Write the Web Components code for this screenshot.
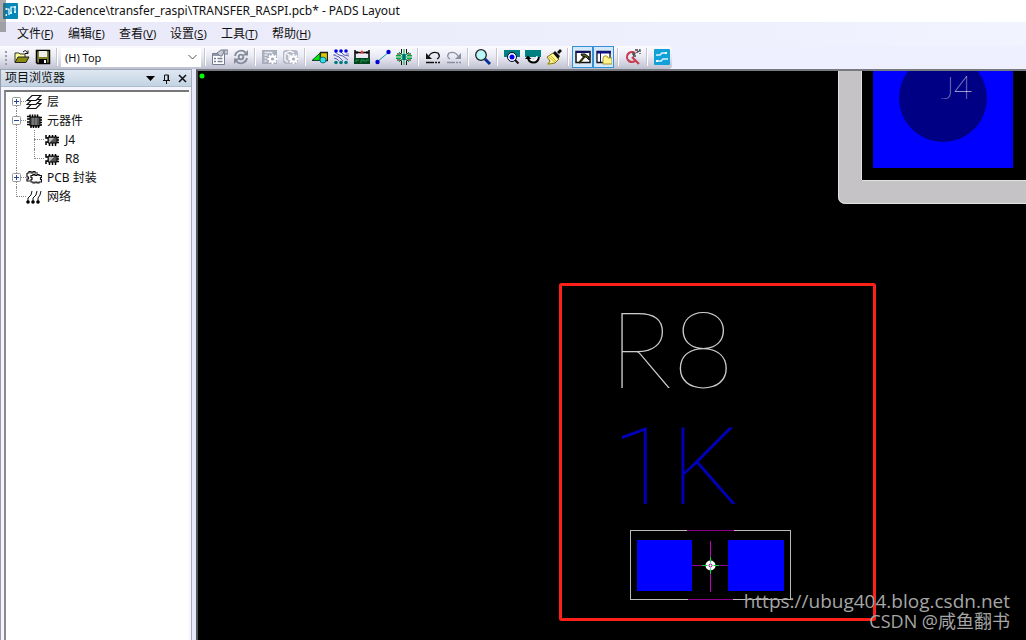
<!DOCTYPE html>
<html lang="zh-CN">
<head>
<meta charset="utf-8">
<title>PADS Layout</title>
<style>
html,body{margin:0;height:100%}
body{font:12px/16px "Noto Sans","Noto Sans CJK SC",sans-serif;color:#111;background:#eef0ff;overflow:hidden}
</style>
</head>
<body>
<pads-window></pads-window>
<script>
const define = (name, html, ready) => {
  const t = document.createElement('template');
  t.innerHTML = html;
  customElements.define(name, class extends HTMLElement {
    connectedCallback() {
      if (this.shadowRoot) return;
      this.attachShadow({mode: 'open'}).append(t.content.cloneNode(true));
      if (ready) ready(this, this.shadowRoot);
    }
  });
};

const gear = (x, y, c) => `<path d="M${x} ${y-5}v10M${x-5} ${y}h10M${x-3.5} ${y-3.5}l7 7M${x+3.5} ${y-3.5}l-7 7" stroke="${c}" stroke-width="1.8"/><circle cx="${x}" cy="${y}" r="3.4" fill="${c}"/><circle cx="${x}" cy="${y}" r="1.6" fill="#a0a6b6"/>`;

const icons = {
  open: '<path d="M1 13V4h4l1 1h5v3" fill="#ffff9c" stroke="#333" /><path d="M1 13.500L4 8h11l-3 5.500z" fill="#8b8b10" stroke="#222"/><path d="M9 3q3-3 4.500 1M14 1.500v3h-3" fill="none" stroke="#111"/>',
  save: '<path d="M1.500 1.500h13v13h-12l-1-1z" fill="#83832a" stroke="#000" stroke-width="1.500"/><path d="M4 2h8v6H4z" fill="#eee"/><path d="M4 10h8v5H4z" fill="#000"/><path d="M9 11h2v3H9z" fill="#fff"/>',
  props: '<path d="M.5 4.500h12v11H.500z" fill="#fff" stroke="#777e91"/><path d="M1 5h8v2H1z" fill="#9299aa"/><path d="M2 9.500h2M5.500 9.500h5M2 12.500h2M5.500 12.500h5" stroke="#777e91" stroke-width="1.500"/><path d="M5 4l4-3h3v2l-2 4H8zM12 1h4v4h-4z" fill="#c5c9d4" stroke="#777e91"/>',
  cycle: '<path d="M2 7a6.200 6.200 0 0 1 10.500-3.500M14 9a6.200 6.200 0 0 1-10.500 3.500" fill="none" stroke="#858b9b" stroke-width="1.800"/><path d="M15 1v5.500h-5.500zM1 15V9.500h5.500z" fill="#858b9b"/><circle cx="8" cy="8" r="2.300" fill="none" stroke="#858b9b" stroke-width="1.800"/>',
  cfg1: '<path d="M0 1h15v14H0z" fill="#a9aebd"/><path d="M2.500 3.500h8M2.500 6h3M2.500 9h2M2.500 12h2" stroke="#e9ebf2" stroke-width="1.300"/>' + gear(10.5,10,'#fff'),
  cfg2: '<rect y="1" width="15" height="14" rx="3" fill="#b4b8c7"/><path d="M2 4l5-2 4 2M2 4v7l3 2M2 4l4 2v3" fill="none" stroke="#fff" stroke-width="1.300"/>' + gear(10.5,10,'#fff'),
  shapes: '<path d="M8.500 3.500h7v8h-7z" fill="#e6c800" stroke="#222" stroke-width="1.300"/><path d="M0 11.500L8 4v7.500z" fill="#00e800" stroke="#143"/><circle cx="11" cy="11" r="3" fill="#38dce4" stroke="#087783"/>',
  nets: '<path d="M2 3l4 3 4 1 5 4M7 2l4 4 5 1M1 6l5 2 4 4M1 9l3 1 2 2" fill="none" stroke="#4a50b8" stroke-width=".9"/><path d="M13 5h3M0 6h3" stroke="#7880d0"/><g fill="#0000e8"><circle cx="3" cy="2" r="1.800"/><circle cx="8" cy="2" r="1.800"/><circle cx="13" cy="2" r="1.800"/></g><g fill="#00797b"><circle cx="3" cy="13.500" r="1.800"/><circle cx="8" cy="13.500" r="1.800"/><circle cx="13" cy="13.500" r="1.800"/></g>',
  verify: '<path d="M1 1v10M15 1v10M1 3.500h14" stroke="#000" stroke-width="1.500" fill="none"/><path d="M3 2v3M13 2v3" stroke="#000"/><path d="M6 4.500L8 1l2 3.500z" fill="#e33"/><path d="M0 9h16v6H0z" fill="#042"/><path d="M2 13v-2h3M7 14v-3h3v2M12 13v-2h3" fill="none" stroke="#299544"/>',
  route: '<path d="M2 13L14 3" stroke="#0797aa"/><circle cx="2.500" cy="13" r="2.200" fill="#0000d8"/><circle cx="13.500" cy="3" r="2.200" fill="#0000d8"/>',
  burst: '<path d="M8 0v16M0 8h16M3 3l10 10M13 3L3 13" stroke="#0a3"/><path d="M5.500 0v4l-1 1H1M10.500 0v4l1 1H15M5.500 16v-4l-1-1H1M10.500 16v-4l1-1H15" stroke="#111" fill="none"/><path d="M0 6.500h5M11 6.500h5M0 9.500h5M11 9.500h5" stroke="#0a3"/><rect x="6" y="5" width="4" height="6" fill="#079c91"/><path d="M8 5v6" stroke="#133"/>',
  undo: '<path d="M4 7q3-5 9-3 3 4-1 6" fill="none" stroke="#111" stroke-width="1.300"/><path d="M1 4v6h6z" fill="#111"/><path d="M1 13.500h8M10 13.500h2M13 13.500h2" stroke="#111" stroke-width="1.500"/>',
  redo: '<path d="M12 7q-3-5-9-3-3 4 1 6" fill="none" stroke="#8a8fa0" stroke-width="1.300"/><path d="M15 4v6H9z" fill="#8a8fa0"/><path d="M1 13.500h8M10 13.500h2M13 13.500h2" stroke="#8a8fa0" stroke-width="1.500"/>',
  zoom: '<path d="M10 10l5 5" stroke="#042f96" stroke-width="3"/><circle cx="6" cy="6" r="5.300" fill="#baf7fb" stroke="#222" stroke-width="1.300"/>',
  view: '<path d="M0 1h16v7H0z" fill="#008080"/><path d="M10.500 10.500l4 4" stroke="#111" stroke-width="2"/><circle cx="8" cy="8" r="4.500" fill="#fff" stroke="#003"/><circle cx="8" cy="8" r="2.500" fill="#00e"/>',
  redraw: '<path d="M0 1h16v7H0z" fill="#008080"/><path d="M3 8q0 6 5 6 6 0 6-6l-3-1q1 4-3 4-2 0-2-3z" fill="#fff"/><path d="M3 9q1 4.500 5.500 4.500T14 8" fill="none" stroke="#000" stroke-width="2"/><path d="M0 10l3-3.500L6.500 10z" fill="#000"/>',
  brush: '<path d="M1 8l6-4 6 6-4 4-7 1 2-3z" fill="#fff493" stroke="#797013"/><path d="M3 8l6 5M5 7l5 5M1 15h5" stroke="#c9b520"/><path d="M7 4l2-2 5 5-2 3zM11 3l3-3 2 2-3 3z" fill="#111"/>',
  output: '<path d="M1 2.500h14v11H1z" fill="#fff" stroke="#111" stroke-width="1.500"/><path d="M1 2h14v2H1z" fill="#101060"/><path d="M4 14l6-7" stroke="#332b00" stroke-width="2"/><path d="M6 5h4l4 3v3l-3-3-4-1z" fill="#58631c" stroke="#111"/>',
  explorer: '<path d="M1 2.500h13v11H1z" fill="#fff" stroke="#111" stroke-width="1.300"/><path d="M1 2h14v2.500H1z" fill="#101080"/><path d="M4.500 4v9" stroke="#101080"/><path d="M7 9l1-2h3l1 2h4v6H7z" fill="#fff48d" stroke="#aa982a"/>',
  quick: '<path d="M10 4a5 5 0 1 0 1 7M7 8l7 7" fill="none" stroke="#c54055" stroke-width="2.200"/><path d="M8 6l6-4M10 1l5 0v4M8 3v4h3" fill="none" stroke="#444" stroke-width="1.300" stroke-dasharray="3 1"/>',
  sync: '<rect width="16" height="16" rx="1" fill="#12a0d8"/><path d="M2 6h4l2-2h5M2 12h5l2-2h5" fill="none" stroke="#d8f4ff" stroke-width="1.600"/><path d="M11 3h2v2h-2zM2 11h2v2H2z" fill="#fff"/>',
  layers: '<g fill="#fff" stroke="#111" stroke-width="1.200"><path d="M6 9.500h9l-5 5H1z"/><path d="M6 5.500h9l-5 5H1z"/><path d="M6 1.500h9l-5 5H1z"/></g>',
  parts: '<path d="M4 4h10v9H4z" fill="#555" stroke="#000"/><path d="M1 3.500h3V1.500M4 6h-3M4 9h-3M4 11.500h-3M6.500 4V1.500M9 4V1.500M11.500 4V1.500M14 4.500h2M14 7h2M14 9.500h2M14 12h2M5 12v3M7.500 12v3M10 12v3M12.500 12v3" fill="none" stroke="#000" stroke-width="1.500"/><path d="M7 5v7M10 5v7" stroke="#999"/>',
  part: '<path d="M4 5h9v6H4z" fill="#555" stroke="#000"/><path d="M5 6h5l-5 5z" fill="#bbb"/><path d="M2 3v3h2M2 13v-3h2M5.500 5V3M8.500 5V3M11.500 5V3M13 5.500h2M13 8h2M13 10.500h2M5.500 11v3M8.500 11v3M11.500 11v3" fill="none" stroke="#000" stroke-width="1.500"/>',
  decals: '<path d="M1 3h2V1.500h2V3h2V1.500h2V3h3M4 11H1V9h1.500V7H1V3" fill="none" stroke="#111" stroke-width="1.200"/><path d="M5 5.500h2v-1h2v1h2v-1h2v1h2.500v2h-1v2h1v2.500h-2.500v1h-2v-1H9v1H7v-1H5V9.500h1v-2H5z" fill="#fff" stroke="#111" stroke-width="1.200"/>',
  nettree: '<path d="M2 13V9l3-3 1-4M7 13V9l3-3 1-4M12 13V9l2-3 1-4" fill="none" stroke="#111"/><circle cx="2" cy="13" r="1.800"/><circle cx="7" cy="13" r="1.800"/><circle cx="12" cy="13" r="1.800"/>',
};

define('pads-icon', `<style>:host{display:block;width:16px;height:16px;flex:none}svg{display:block;width:100%;height:100%}</style><svg viewBox="0 0 16 16" aria-hidden="true"></svg>`,
  (el, r) => r.querySelector('svg').innerHTML = icons[el.getAttribute('name')]);

define('title-bar', `<style>
:host{display:flex;align-items:center;height:22px;background:#fff;gap:5px;padding-left:3px;flex:none}
svg{width:15px;height:16px}
h1{font:inherit;margin:0;white-space:nowrap}
</style>
<svg viewBox="0 0 15 16" aria-hidden="true"><rect width="15" height="16" rx="1" fill="#0786b8"/><path d="M3 6h3v6M8 9V4h4v5" fill="none" stroke="#fff" stroke-width="1.200"/><path d="M2 6h2M11 9h2M2 12h2M7 10h2M11 4h2" stroke="#c8f5ff" stroke-width="1.800"/></svg>
<h1><slot></slot></h1>`);

define('menu-bar', `<style>
:host{display:flex;align-items:center;height:24px;flex:none;padding-left:17px;gap:14px;background:linear-gradient(90deg,#e9e9f9,#f1f3ff)}
</style><slot></slot>`);
define('menu-item', `<style>
:host{display:block;width:37px}
button{font:inherit;color:inherit;background:none;border:0;padding:0;white-space:nowrap;display:block;line-height:18px}
small{font-size:11px}
</style><button type="button"><slot></slot><small>(<u></u>)</small></button>`,
  (el, r) => r.querySelector('u').textContent = el.getAttribute('key'));

define('tool-button', `<style>
:host{display:block;flex:none}
button{box-sizing:border-box;width:21px;height:22px;padding:0;border:0;background:none;display:grid;place-items:center}
:host([pressed]) button{border:1px solid #3390d8;background:#d6e9fa}
</style><button type="button"></button>`,
  (el, r) => {
    const n = el.getAttribute('icon'), b = r.querySelector('button');
    b.innerHTML = `<pads-icon name="${n}"></pads-icon>`;
    b.setAttribute('aria-label', n);
  });
define('tool-separator', `<style>:host{display:block;flex:none;width:1px;height:18px;margin:0 4px 0 3px;background:#c5c6cf;box-shadow:1px 0 #fff}</style>`);
define('layer-select', `<style>
:host{display:block;position:relative;width:140px;height:19px;flex:none}
select{appearance:none;font:11px/17px "Noto Sans",sans-serif;color:#111;width:100%;height:100%;padding:0 4px;border:0;border-radius:0;background:#fff;display:block}
svg{position:absolute;right:4px;top:6px;width:9px;height:7px}
</style><select aria-label="Layer"><option>(H) Top</option></select><svg viewBox="0 0 9 7" aria-hidden="true"><path d="M.5 1l4 4 4-4" fill="none" stroke="#555"/></svg>`);

define('tool-bar', `<style>
:host{display:flex;height:23px;flex:none}
div{display:flex;align-items:flex-start;padding-left:11px;border-radius:0 4px 4px 0;background:linear-gradient(#fbfbff,#eaeaf4 45%,#bfc0d0);position:relative}
::slotted(layer-select),::slotted(tool-separator){margin-top:2px}
div::before{content:"";position:absolute;left:5px;top:5px;width:2px;height:14px;background:repeating-linear-gradient(#999cac 0 2px,transparent 2px 4px)}
</style><div role="toolbar"><slot></slot></div>`);

define('tree-node', `<style>
:host{display:block;position:relative}
.row{display:flex;align-items:center;height:19px}
.box{width:9px;height:9px;margin-right:5px;flex:none;position:relative}
.box::before{content:"";position:absolute;left:4px;top:4px;width:10px;border-top:1px dotted #888}
.box svg{position:absolute;inset:0;display:none}
:host([state]) .box svg{display:block}
:host([state=open]) .v{display:none}
pads-icon{margin-right:5px}
.kids{display:block;padding-left:18px}
:host::before{content:"";position:absolute;left:4px;top:0;bottom:0;border-left:1px dotted #888}
:host([first])::before{top:9px}
:host([last])::before{bottom:auto;height:10px}
</style><div class="row"><span class="box"><svg width="9" height="9" viewBox="0 0 9 9"><rect x=".5" y=".5" width="8" height="8" rx="1" fill="#fff" stroke="#999"/><path d="M2 4.500h5" stroke="#2445a0"/><path class="v" d="M4.500 2v5" stroke="#2445a0"/></svg></span><i></i><span class="label"></span></div><div class="kids"><slot></slot></div>`,
  (el, r) => {
    r.querySelector('i').outerHTML = `<pads-icon name="${el.getAttribute('icon')}"></pads-icon>`;
    r.querySelector('.label').textContent = el.getAttribute('label');
  });

define('project-explorer', `<style>
:host{display:flex;flex-direction:column;box-sizing:border-box;width:192px;flex:none;border-left:1px solid #9a9aa8;border-right:1px solid #a8aab8;background:#f4f5ff}
header{display:flex;align-items:center;height:16px;padding:0 1px 0 4px;background:linear-gradient(#dfe8f2,#c3d3e3);border-top:1px solid #9ba6b5;border-bottom:1px solid #aebccd;flex:none}
h2{font:inherit;margin:0;flex:1}
button{border:0;background:none;padding:0;width:16px;height:16px;display:grid;place-items:center}
svg{width:11px;height:11px}
.tree{flex:1;margin:3px 2px 0 3px;border-left:2px solid #8b8b8b;border-top:2px solid #777;background:#fff;padding:0 0 0 6px}
</style>
<header><h2>项目浏览器</h2>
<button type="button" aria-label="Menu"><svg viewBox="0 0 11 11"><path d="M1 3h9L5.500 8z"/></svg></button>
<button type="button" aria-label="Pin"><svg viewBox="0 0 11 11"><path d="M3.500 7V2h4v5M2 7.500h7M5.500 7v4M7 2v5" fill="none" stroke="#111"/></svg></button>
<button type="button" aria-label="Close"><svg viewBox="0 0 11 11"><path d="M2 2l7 7M9 2L2 9" stroke="#111" stroke-width="1.500"/></svg></button>
</header>
<div class="tree">
<tree-node first state="closed" icon="layers" label="层"></tree-node>
<tree-node state="open" icon="parts" label="元器件"><tree-node icon="part" label="J4"></tree-node><tree-node last icon="part" label="R8"></tree-node></tree-node>
<tree-node state="closed" icon="decals" label="PCB 封装"></tree-node>
<tree-node last icon="nettree" label="网络"></tree-node>
</div>`);

/* Board artwork is in window coordinates; the group shifts it to the canvas origin. */
define('pcb-canvas', `<style>
:host{display:block;flex:1;position:relative;background:#000;overflow:hidden;border-top:2px solid #777a80;border-left:2px solid #555}
svg{position:absolute;left:0;top:0;width:100%;height:100%}
text{font-family:Lato,sans-serif;font-weight:100}
.value{font-family:Roboto,sans-serif}
.mark{position:absolute;right:16px;bottom:9px;display:flex;flex-direction:column;align-items:flex-end;font:18px/20px "Open Sans","Noto Sans CJK SC",sans-serif;color:#a6a6a6;white-space:nowrap}
.mark a{font-size:19px;color:inherit;text-decoration:none}
</style>
<svg aria-label="PCB"><g transform="translate(-198 -71)">
<circle cx="202" cy="76" r="2.500" fill="#0f0"/>
<path d="M838 60V196q0 8 8 8H1400V181H861V60z" fill="#c6c3c6"/>
<path d="M861.500 60V180.500H1400M838.500 60V196q0 7.500 8 7.500H1400" fill="none" stroke="#e2e2e2"/>
<rect x="873" y="60" width="140" height="108" fill="#00f"/>
<circle cx="943" cy="98" r="44" fill="#000084"/>
<text x="941" y="99" font-size="32" fill="#fff">J4</text>
<text x="609" y="388" font-size="107" fill="#ccc">R8</text>
<text class="value" x="612" y="504" font-size="108" fill="#00b">1K</text>
<rect x="630.500" y="530.500" width="160" height="69" fill="none" stroke="#bbb"/>
<path d="M687 530.500h47" stroke="#90008f"/><path d="M688 599.500h45" stroke="#90008f"/><path d="M692 565.500h36" stroke="#90008f"/><path d="M710.500 541v51" stroke="#c000c0"/>
<path d="M637 540h55v51h-55zM728 540h56v51h-56z" fill="#00f"/>
<circle cx="710.500" cy="565.500" r="5" fill="#fff"/><path d="M710.500 557v17M702 565.500h17" stroke="#0d3"/><circle cx="710.500" cy="565.500" r="3" fill="#fff"/><circle cx="710.500" cy="565.500" r="1.500" fill="#fff" stroke="#808"/>
<rect x="560.500" y="284.500" width="314" height="335" rx="1" fill="none" stroke="#ff2018" stroke-width="3"/>
</g></svg>
<div class="mark"><a href="https://ubug404.blog.csdn.net">https://ubug404.blog.csdn.net</a><span>CSDN @咸鱼翻书</span></div>`);

define('pads-window', `<style>
:host{display:flex;flex-direction:column;height:100vh;position:relative}
:host::before{content:"";position:absolute;left:0;top:0;width:6px;height:32px;background:#555;opacity:.5;z-index:1}
main{display:flex;flex:1;min-height:0}
.split{width:4px;background:#e6e8fa;flex:none}
</style>
<title-bar>D:\\22-Cadence\\transfer_raspi\\TRANSFER_RASPI.pcb* - PADS Layout</title-bar>
<menu-bar><menu-item key="F">文件</menu-item><menu-item key="E">编辑</menu-item><menu-item key="V">查看</menu-item><menu-item key="S">设置</menu-item><menu-item key="T">工具</menu-item><menu-item key="H">帮助</menu-item></menu-bar>
<tool-bar>${[
  'open','save','|','select','|','props','cycle','|','cfg1','cfg2','|','shapes','nets','verify','route','burst','|','undo','redo','|','zoom','|','view','redraw','brush','|','+output','+explorer','|','quick','|','sync'
].map(n => n === '|' ? '<tool-separator></tool-separator>' : n === 'select' ? '<layer-select></layer-select>' : n[0] === '+' ? `<tool-button pressed icon="${n.slice(1)}"></tool-button>` : `<tool-button icon="${n}"></tool-button>`).join('')}</tool-bar>
<main><project-explorer></project-explorer><div class="split"></div><pcb-canvas></pcb-canvas></main>`);
</script>
</body>
</html>
